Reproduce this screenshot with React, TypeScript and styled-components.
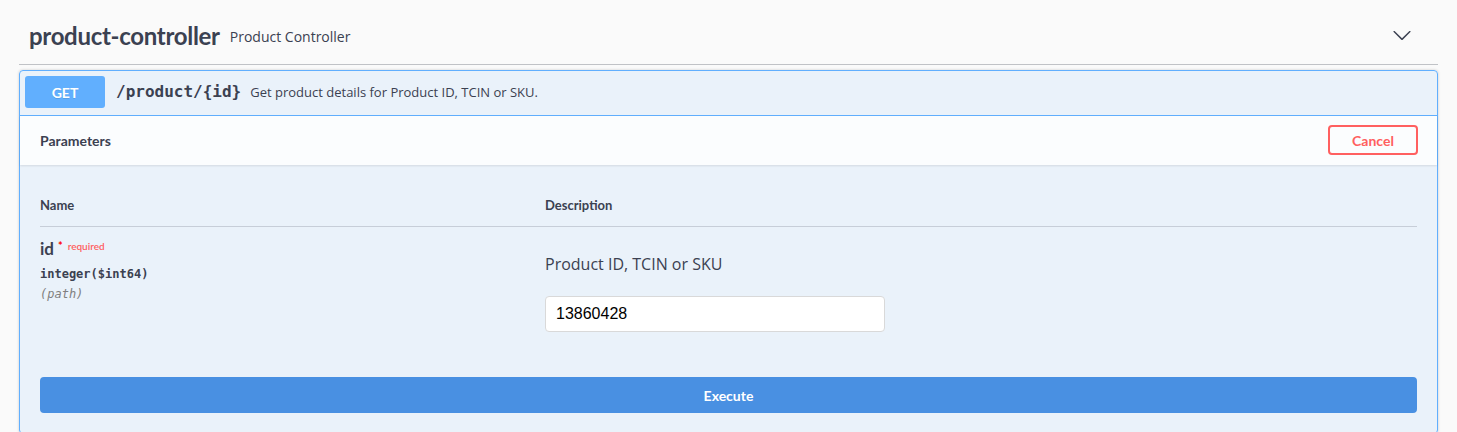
import React from "react";
import styled, { createGlobalStyle } from "styled-components";

const Global = createGlobalStyle`
  html, body { margin: 0; padding: 0; background: #fafafa; }
  body { font-family: "Open Sans", sans-serif; color: #3b4151; }
  * { box-sizing: border-box; }
`;

const head = `"Lato", "Open Sans", sans-serif`;
const mono = `"DejaVu Sans Mono", "Liberation Mono", monospace`;

const Wrapper = styled.div`
  padding: 11px 19px 0 19px;
  height: 432px;
  overflow: hidden;
`;

const TagHeader = styled.div`
  display: flex;
  align-items: center;
  height: 54px;
  padding: 0 20px 4px 10px;
  border-bottom: 1px solid rgba(59, 65, 81, 0.3);
`;

const TagName = styled.h3`
  margin: 0;
  font-family: ${head};
  font-size: 24px;
  font-weight: 700;
  letter-spacing: -0.3px;
  color: #3b4151;
`;

const TagDesc = styled.small`
  flex: 1;
  padding: 0 10px;
  font-family: "Open Sans", sans-serif;
  font-size: 14px;
  color: #3b4151;
  margin-top: 2px;
`;

const Chevron = styled.svg`
  width: 20px;
  height: 20px;
  fill: #3b4151;
  margin-right: 6px;
  margin-top: -1px;
`;

const OpBlock = styled.div`
  margin-top: 5px;
  border: 1px solid #61affe;
  border-radius: 4px;
  background: rgba(97, 175, 254, 0.1);
  box-shadow: 0 0 3px rgba(0, 0, 0, 0.19);
`;

const Summary = styled.div`
  display: flex;
  align-items: flex-start;
  padding: 5px 5px 7px 5px;
  border-bottom: 1px solid #61affe;
`;

const Method = styled.span`
  display: flex;
  align-items: center;
  justify-content: center;
  width: 80px;
  height: 32px;
  border-radius: 3px;
  background: #61affe;
  color: #fff;
  font-family: ${head};
  font-weight: 700;
  font-size: 14px;
  text-shadow: 0 1px 0 rgba(0, 0, 0, 0.1);
`;

const Path = styled.span`
  padding: 0 9px 0 11px;
  font-family: ${mono};
  font-weight: 700;
  font-size: 16px;
  line-height: 32px;
  color: #3b4151;
`;

const SumDesc = styled.span`
  font-family: "Open Sans", sans-serif;
  font-size: 13px;
  line-height: 32px;
  color: #3b4151;
`;

const SectionHeader = styled.div`
  display: flex;
  align-items: center;
  justify-content: space-between;
  min-height: 49px;
  padding: 7px 19px 8px 20px;
  background: rgba(255, 255, 255, 0.8);
  box-shadow: 0 1px 2px rgba(0, 0, 0, 0.1);
`;

const SectionTitle = styled.h4`
  margin: 0;
  font-family: ${head};
  font-weight: 700;
  font-size: 14px;
  color: #3b4151;
`;

const Button = styled.button<{ $variant: "cancel" | "execute" }>`
  font-family: ${head};
  font-weight: 700;
  font-size: 14px;
  border-radius: 4px;
  cursor: pointer;
  ${(p) =>
    p.$variant === "cancel"
      ? `
    width: 90px; height: 30px;
    background: transparent;
    border: 2px solid #ff6060;
    color: #ff6060;
  `
      : `
    width: 100%; height: 36px;
    background: #4990e2;
    border: 2px solid #4990e2;
    color: #fff;
  `}
`;

const TableBox = styled.div`
  padding: 20px 20px 0 20px;
`;

const Grid = styled.div`
  display: grid;
  grid-template-columns: 505px 1fr;
`;

const Th = styled.div`
  padding: 12px 0;
  font-family: ${head};
  font-weight: 700;
  font-size: 13px;
  line-height: 17px;
  color: #3b4151;
  border-bottom: 1px solid rgba(59, 65, 81, 0.2);
`;

const Td = styled.div`
  padding: 10px 0 0 0;
`;

const ParamName = styled.div`
  display: flex;
  align-items: flex-start;
  font-family: ${head};
  font-weight: 700;
  font-size: 17px;
  line-height: 24px;
  color: #3b4151;
`;

const Req = styled.span`
  color: red;
  font-size: 11px;
  line-height: 14px;
  margin-left: 4px;
  padding-top: 2px;
  display: flex;
  gap: 5px;
  font-weight: 700;
  small { color: #ff5f5f; font-size: 10px; font-weight: 600; }
`;

const ParamType = styled.div`
  padding: 6px 0 0 0;
  font-family: ${mono};
  font-size: 12px;
  font-weight: 600;
  color: #3b4151;
`;

const ParamIn = styled.div`
  padding-top: 6px;
  font-family: ${mono};
  font-size: 12px;
  font-style: italic;
  color: gray;
`;

const Markdown = styled.p`
  margin: 15px 0 20px 0;
  font-family: "Open Sans", sans-serif;
  font-size: 16px;
  line-height: 24px;
  color: #3b4151;
`;

const Input = styled.input`
  display: block;
  width: 340px;
  height: 36px;
  padding: 8px 10px;
  border: 1px solid #d9d9d9;
  border-radius: 4px;
  background: #fff;
  font-family: "Liberation Sans", Arial, sans-serif;
  font-size: 16px;
  color: #000;
  outline: none;
`;

const ExecWrap = styled.div`
  padding: 45px 20px 20px 20px;
`;

export default function App() {
  return (
    <>
      <Global />
      <Wrapper>
        <TagHeader>
          <TagName>product-controller</TagName>
          <TagDesc>Product Controller</TagDesc>
          <Chevron viewBox="0 0 20 20">
            <path d="M17.418 6.109c.272-.268.709-.268.979 0s.271.701 0 .969l-7.908 7.83c-.27.268-.707.268-.979 0l-7.908-7.830c-.27-.268-.27-.701 0-.969.271-.268.709-.268.979 0L10 13.25l7.418-7.141z" />
          </Chevron>
        </TagHeader>
        <OpBlock>
          <Summary>
            <Method>GET</Method>
            <Path>/product/&#123;id&#125;</Path>
            <SumDesc>Get product details for Product ID, TCIN or SKU.</SumDesc>
          </Summary>
          <SectionHeader>
            <SectionTitle>Parameters</SectionTitle>
            <Button $variant="cancel">Cancel</Button>
          </SectionHeader>
          <TableBox>
            <Grid>
              <Th>Name</Th>
              <Th>Description</Th>
              <Td>
                <ParamName>
                  id
                  <Req>
                    *<small>required</small>
                  </Req>
                </ParamName>
                <ParamType>integer($int64)</ParamType>
                <ParamIn>(path)</ParamIn>
              </Td>
              <Td>
                <Markdown>Product ID, TCIN or SKU</Markdown>
                <Input defaultValue="13860428" />
              </Td>
            </Grid>
          </TableBox>
          <ExecWrap>
            <Button $variant="execute">Execute</Button>
          </ExecWrap>
        </OpBlock>
      </Wrapper>
    </>
  );
}
